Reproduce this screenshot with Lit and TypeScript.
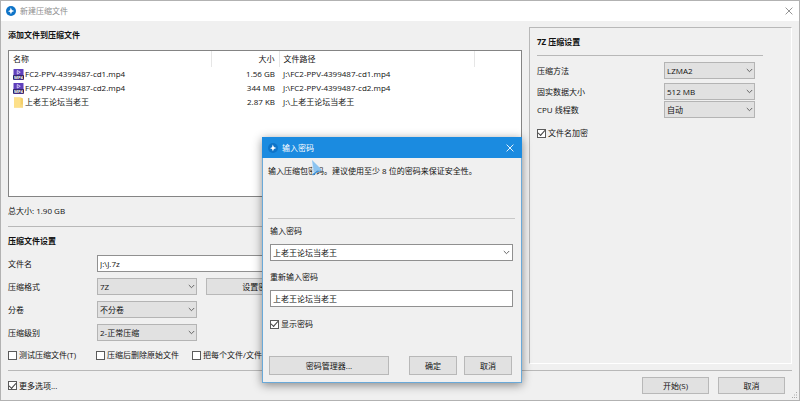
import { LitElement, html, css, svg } from "lit";
import { customElement, property } from "lit/decorators.js";

const controls = css`
  * {
    box-sizing: border-box;
  }
  button,
  input,
  select {
    font: inherit;
    color: inherit;
    margin: 0;
    border-radius: 0;
    outline: none;
  }
  .button {
    height: 17px;
    padding: 0;
    line-height: 15px;
    text-align: center;
    background: #e1e1e1;
    border: 1px solid #b8b8b8;
  }
  .field {
    width: 100%;
    height: 17px;
    padding: 0 4px 0 2px;
    background: #fff;
    border: 1px solid #909090;
  }
  .check {
    display: flex;
    align-items: center;
    gap: 2px;
    height: 14px;
    white-space: nowrap;
  }
  .check input {
    appearance: none;
    flex: none;
    display: grid;
    place-items: center;
    width: 9px;
    height: 9px;
    background: #fff;
    border: 1px solid #5a5a5a;
  }
  .check input:checked::before {
    content: "";
    width: 6px;
    height: 3px;
    margin-bottom: 2px;
    border: solid #444;
    border-width: 0 0 1px 1px;
    transform: rotate(-48deg);
  }
  .rule {
    height: 1px;
    margin: 0;
    border: 0;
    background: #b8b8b8;
  }
`;

const logo = html`<svg class="logo" viewBox="0 0 20 20" aria-hidden="true">
  <circle cx="10" cy="10" r="10" fill="#0f74c8" />
  <path
    d="M9.5 3.2 L11.8 7.8 L16.6 10 L11.8 12 L9.8 16.6 L8 12.2 L4 10.4 L8 8.4 Z"
    fill="#fff"
  />
</svg>`;

const cross = html`<svg viewBox="0 0 8 8" width="8" height="8" aria-hidden="true">
  <path d="M.6 .6 L7.4 7.4 M7.4 .6 L.6 7.4" stroke="currentColor" stroke-width=".9" fill="none" />
</svg>`;

const chevron = html`<svg class="chevron" viewBox="0 0 7 5" aria-hidden="true">
  <path d="M.8 1 L3.5 3.7 L6.2 1" stroke="#666" stroke-width="1" fill="none" />
</svg>`;

const videoIcon = html`<svg class="file-icon" viewBox="0 0 22 22" aria-hidden="true">
  <rect x="1" y="0" width="20" height="22" rx="1" fill="#5f40bb" />
  <path d="M8.5 3 L14.500 6.5 L8.5 10 Z" fill="none" stroke="#e6defa" stroke-width="1.6" />
  <rect x="0" y="12.5" width="22" height="8.5" fill="#2a1d55" />
  ${svg`<text x="11" y="20" text-anchor="middle" font-size="8.5" font-weight="700" fill="#fff">MP4</text>`}
</svg>`;

const folderIcon = html`<svg class="file-icon" viewBox="0 0 22 22" aria-hidden="true">
  <path d="M2 1 H16 L20 3 V21 H2 Z" fill="#f3cf6a" />
  <path d="M2 1 H15 V21 H2 Z" fill="#fde08a" />
  <path d="M15 15 H20 V21 H15 Z" fill="#f8da86" />
</svg>`;

@customElement("drop-list")
class DropList extends LitElement {
  @property() value = "";
  @property() label = "";

  static styles = [
    controls,
    css`
      :host {
        display: grid;
        align-items: center;
      }
      .select,
      .chevron {
        grid-area: 1 / 1;
      }
      .select {
        appearance: none;
        width: 100%;
        height: 17px;
        padding: 0 16px 0 2px;
        line-height: 15px;
        background: #e1e1e1;
        border: 1px solid #b4b4b4;
      }
      .chevron {
        justify-self: end;
        width: 7px;
        height: 5px;
        margin-right: 2px;
        pointer-events: none;
      }
    `,
  ];

  render() {
    return html`<select class="select" aria-label=${this.label}>
        <option>${this.value}</option>
      </select>
      ${chevron}`;
  }
}

@customElement("password-dialog")
class PasswordDialog extends LitElement {
  static styles = [
    controls,
    css`
      :host {
        display: block;
        background: #f0f0f0;
        border: 1px solid #6aa9d8;
        box-shadow: 0 2px 9px rgba(0, 0, 0, 0.45);
      }
      .titlebar {
        display: flex;
        align-items: center;
        gap: 4px;
        height: 21px;
        margin: -1px -1px 0;
        padding: 0 8px 0 6px;
        color: #fff;
        background: #1b8be0;
      }
      .logo {
        width: 10px;
        height: 10px;
      }
      .title {
        flex: 1;
      }
      .close {
        display: grid;
        padding: 0;
        color: #fff;
        background: none;
        border: 0;
      }
      .hint {
        height: 61px;
        margin: 0 6px 0 5px;
        padding-top: 6px;
        line-height: 14px;
        white-space: nowrap;
        border-bottom: 1px solid #c8c8c8;
      }
      .form {
        display: flex;
        flex-direction: column;
        padding: 5px 8px 0 7px;
      }
      .label {
        line-height: 14px;
        margin-bottom: 6px;
      }
      .combo {
        display: grid;
        align-items: center;
        margin-bottom: 9px;
      }
      .combo > * {
        grid-area: 1 / 1;
      }
      .open {
        justify-self: end;
        display: grid;
        padding: 0 3px;
        background: none;
        border: 0;
      }
      .chevron {
        width: 7px;
        height: 5px;
      }
      .check {
        margin-top: 10px;
      }
      .buttons {
        display: flex;
        gap: 7px;
        padding: 25px 9px 7px 6px;
      }
      .buttons .button {
        width: 48px;
        height: 19px;
      }
      .buttons .manager {
        width: 120px;
        margin-right: auto;
      }
    `,
  ];

  render() {
    return html`
      <div class="titlebar">
        ${logo}<span class="title">输入密码</span>
        <button class="close" aria-label="关闭">${cross}</button>
      </div>
      <div class="hint">输入压缩包密码。建议使用至少 8 位的密码来保证安全性。</div>
      <div class="form">
        <label class="label" for="first">输入密码</label>
        <div class="combo">
          <input class="field" id="first" value="上老王论坛当老王" />
          <button class="open" aria-label="展开">${chevron}</button>
        </div>
        <label class="label" for="again">重新输入密码</label>
        <input class="field" id="again" value="上老王论坛当老王" />
        <label class="check"><input type="checkbox" checked />显示密码</label>
      </div>
      <div class="buttons">
        <button class="button manager">密码管理器...</button>
        <button class="button">确定</button>
        <button class="button">取消</button>
      </div>
    `;
  }
}

@customElement("app-root")
class AppRoot extends LitElement {
  static styles = [
    controls,
    css`
      :host {
        position: relative;
        display: flex;
        flex-direction: column;
        box-sizing: border-box;
        min-height: 100vh;
        overflow: hidden;
        font: 8px/14px "Open Sans", "Noto Sans CJK SC", sans-serif;
        color: #111;
        background: #f0f0f0;
        border: 1px solid #b2b2b2;
      }
      .titlebar {
        display: flex;
        align-items: center;
        gap: 4px;
        height: 20px;
        padding: 0 6px 0 5px;
        color: #8c8c8c;
        background: #fff;
      }
      .logo {
        width: 10px;
        height: 10px;
      }
      .title {
        flex: 1;
      }
      .close {
        display: grid;
        padding: 0;
        color: #888;
        background: none;
        border: 0;
      }
      .content {
        flex: 1;
        display: grid;
        grid-template-columns: minmax(0, 1fr) 263px;
        gap: 7px;
        padding: 0 7px;
      }
      .archive {
        display: flex;
        flex-direction: column;
        padding: 7px 0 8px;
      }
      .heading {
        margin: 0;
        font-size: 8px;
        line-height: 14px;
        font-weight: 700;
      }
      .list {
        flex: 1;
        margin: 8px 0 7px;
        background: #fff;
        border: 1px solid #848484;
      }
      .files {
        width: 100%;
        table-layout: fixed;
        border-collapse: collapse;
        white-space: nowrap;
      }
      .files th,
      .files td {
        height: 14px;
        padding: 0 4px;
        text-align: left;
        font-weight: 400;
      }
      .files th {
        height: 16px;
        border-right: 1px solid #e6e6e6;
      }
      .files th:last-child {
        border: 0;
      }
      .files .size {
        text-align: right;
      }
      .col-name {
        width: 202px;
      }
      .col-size {
        width: 68px;
      }
      .col-path {
        width: 195px;
      }
      .name {
        display: flex;
        align-items: center;
        gap: 1px;
      }
      .file-icon {
        width: 11px;
        height: 11px;
      }
      .archive .rule {
        margin: 8px 0 7px;
      }
      .rows {
        display: grid;
        grid-template-columns: 89px 100px 120px 1fr;
        row-gap: 6px;
        align-items: center;
        margin: 7px 0;
      }
      .rows .label {
        grid-column: 1;
      }
      .rows .field {
        grid-column: 2 / -1;
      }
      .rows .button {
        margin-left: 9px;
      }
      .options {
        display: grid;
        grid-template-columns: 88px 96px 1fr;
      }
      .method {
        display: flex;
        flex-direction: column;
        margin: 6px 0;
        padding: 7px 28px 7px 7px;
        border: 1px solid #b8b8b8;
        border-right-color: #fff;
        border-bottom-color: #fff;
      }
      .method .rule {
        margin: 6px 0;
      }
      .setting {
        display: grid;
        grid-template-columns: 1fr 91px;
        align-items: center;
        padding-right: 8px;
        margin-bottom: 4px;
      }
      .setting.tight {
        margin-bottom: 1px;
      }
      .method .check {
        margin-top: 4px;
      }
      .footer {
        display: flex;
        align-items: center;
        gap: 9px;
        margin: 0 7px;
        padding: 6px 7px 6px 0;
        border-top: 1px solid #b8b8b8;
      }
      .footer .check {
        flex: 1;
      }
      .footer .button {
        width: 67px;
      }
      .grip {
        position: absolute;
        right: 1px;
        bottom: 1px;
        width: 7px;
        height: 7px;
      }
      .dialog {
        position: absolute;
        left: 261px;
        top: 136px;
        width: 260px;
      }
      .pointer {
        position: absolute;
        left: 310px;
        top: 158px;
        width: 14px;
        height: 18px;
      }
    `,
  ];

  private files = [
    { icon: videoIcon, name: "FC2-PPV-4399487-cd1.mp4", size: "1.56 GB" },
    { icon: videoIcon, name: "FC2-PPV-4399487-cd2.mp4", size: "344 MB" },
    { icon: folderIcon, name: "上老王论坛当老王", size: "2.87 KB" },
  ];

  private formats = [
    { label: "压缩格式", value: "7Z" },
    { label: "分卷", value: "不分卷" },
    { label: "压缩级别", value: "2-正常压缩" },
  ];

  private settings = [
    { label: "压缩方法", value: "LZMA2", tight: false },
    { label: "固实数据大小", value: "512 MB", tight: true },
    { label: "CPU 线程数", value: "自动", tight: false },
  ];

  render() {
    return html`
      <header class="titlebar">
        ${logo}<span class="title">新建压缩文件</span>
        <button class="close" aria-label="关闭">${cross}</button>
      </header>
      <main class="content">
        <section class="archive">
          <h2 class="heading">添加文件到压缩文件</h2>
          <div class="list">
            <table class="files">
              <colgroup>
                <col class="col-name" />
                <col class="col-size" />
                <col class="col-path" />
                <col />
              </colgroup>
              <thead>
                <tr>
                  <th>名称</th>
                  <th class="size">大小</th>
                  <th>文件路径</th>
                  <th></th>
                </tr>
              </thead>
              <tbody>
                ${this.files.map(
                  (f) => html`<tr>
                    <td><div class="name">${f.icon}<span>${f.name}</span></div></td>
                    <td class="size">${f.size}</td>
                    <td>J:\\${f.name}</td>
                    <td></td>
                  </tr>`
                )}
              </tbody>
            </table>
          </div>
          <div>总大小: 1.90 GB</div>
          <hr class="rule" />
          <h2 class="heading">压缩文件设置</h2>
          <div class="rows">
            <label class="label" for="filename">文件名</label>
            <input class="field" id="filename" value="J:\\J.7z" />
            ${this.formats.map(
              (f, i) => html`<span class="label">${f.label}</span>
                <drop-list .value=${f.value} .label=${f.label}></drop-list>
                ${i === 0 ? html`<button class="button">设置密码...</button>` : ""}`
            )}
          </div>
          <div class="options">
            <label class="check"><input type="checkbox" />测试压缩文件(T)</label>
            <label class="check"><input type="checkbox" />压缩后删除原始文件</label>
            <label class="check"><input type="checkbox" />把每个文件/文件夹</label>
          </div>
        </section>
        <section class="method">
          <h2 class="heading">7Z 压缩设置</h2>
          <hr class="rule" />
          ${this.settings.map(
            (s) => html`<div class="setting ${s.tight ? "tight" : ""}">
              <span>${s.label}</span>
              <drop-list .value=${s.value} .label=${s.label}></drop-list>
            </div>`
          )}
          <label class="check"><input type="checkbox" checked />文件名加密</label>
        </section>
      </main>
      <footer class="footer">
        <label class="check"><input type="checkbox" checked />更多选项...</label>
        <button class="button">开始(S)</button>
        <button class="button">取消</button>
      </footer>
      <svg class="grip" viewBox="0 0 7 7" aria-hidden="true">
        <path
          d="M5 0h1v1h-1z M3 2.5h1v1h-1z M5 2.5h1v1h-1z M1 5h1v1h-1z M3 5h1v1h-1z M5 5h1v1h-1z"
          fill="#aaa"
        />
      </svg>
      <password-dialog class="dialog"></password-dialog>
      <svg class="pointer" viewBox="0 0 14 18" aria-hidden="true">
        <path d="M1 1 L11 11 L1 16 Z" fill="#d5e8f8" fill-opacity=".85" />
        <path d="M1 1 L11 11 L7 11 L3 13 Z" fill="#8cc4f0" />
        <path d="M1 15.500 L6 11.500 L11 11.500 L6 13.500 L2 16.500 Z" fill="#3f93d8" />
      </svg>
    `;
  }
}
